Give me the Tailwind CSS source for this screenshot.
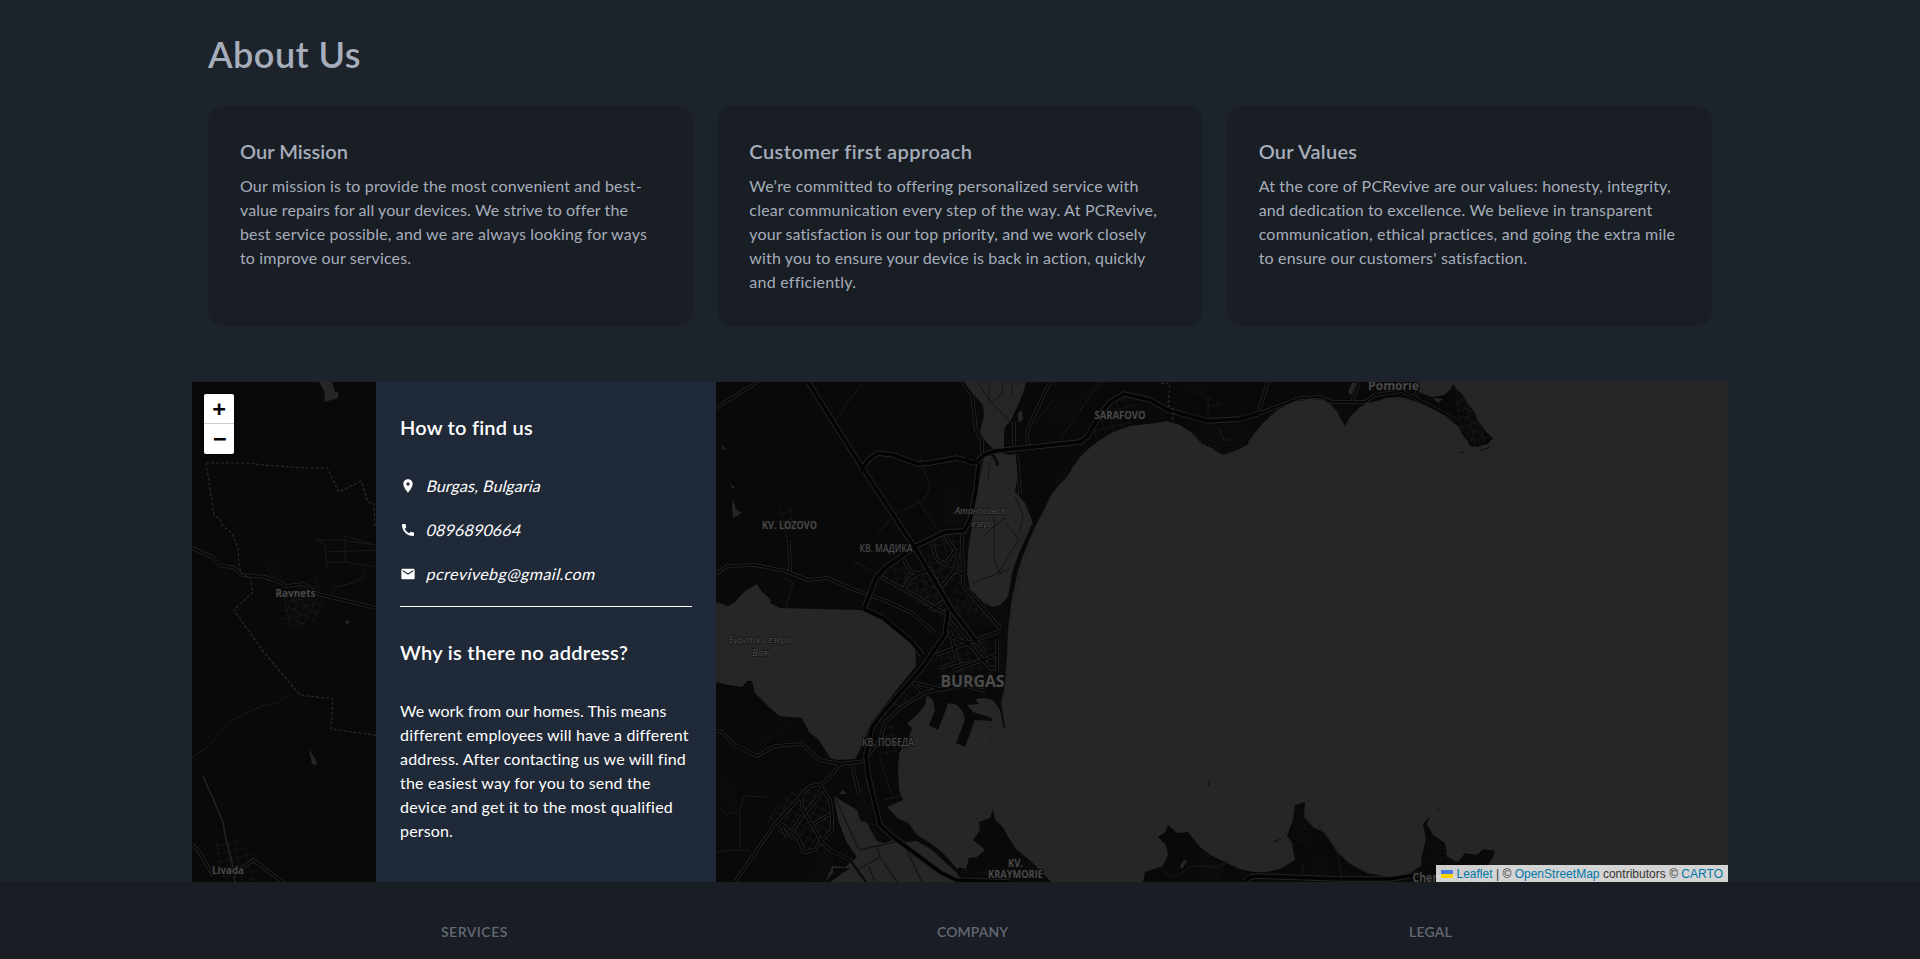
<!DOCTYPE html>
<html lang="en">
<head>
<meta charset="utf-8">
<title>PCRevive - About Us</title>
<script src="https://cdn.jsdelivr.net/npm/@tailwindcss/browser@4"></script>
</head>
<body class="h-[959px] overflow-hidden bg-[#1d232a] font-['Lato',sans-serif] text-[#a6adbb]">

<section class="mx-auto w-[1504px] pt-[34px]">
  <h1 class="text-4xl font-semibold tracking-[0.455px] whitespace-nowrap">About Us</h1>
  <div class="mt-8 grid h-[220px] grid-cols-3 gap-6">
    <article class="rounded-2xl bg-[#191d24] px-8 pt-[31px] whitespace-nowrap">
      <h2 class="text-xl font-semibold tracking-[0.016px]">Our Mission</h2>
      <p class="mt-[9px] text-base leading-6">
        <span class="block tracking-[0.171px]">Our mission is to provide the most convenient and best-</span>
        <span class="block tracking-[0.096px]">value repairs for all your devices. We strive to offer the</span>
        <span class="block tracking-[0.158px]">best service possible, and we are always looking for ways</span>
        <span class="block tracking-[0.166px]">to improve our services.</span>
      </p>
    </article>
    <article class="rounded-2xl bg-[#191d24] px-8 pt-[31px] whitespace-nowrap">
      <h2 class="text-xl font-semibold tracking-[0.431px]">Customer first approach</h2>
      <p class="mt-[9px] text-base leading-6">
        <span class="block tracking-[0.185px]">We’re committed to offering personalized service with</span>
        <span class="block tracking-[0.199px]">clear communication every step of the way. At PCRevive,</span>
        <span class="block tracking-[0.112px]">your satisfaction is our top priority, and we work closely</span>
        <span class="block tracking-[0.135px]">with you to ensure your device is back in action, quickly</span>
        <span class="block tracking-[0.239px]">and efficiently.</span>
      </p>
    </article>
    <article class="rounded-2xl bg-[#191d24] px-8 pt-[31px] whitespace-nowrap">
      <h2 class="text-xl font-semibold tracking-[0.257px]">Our Values</h2>
      <p class="mt-[9px] text-base leading-6">
        <span class="block tracking-[0.177px]">At the core of PCRevive are our values: honesty, integrity,</span>
        <span class="block tracking-[0.138px]">and dedication to excellence. We believe in transparent</span>
        <span class="block tracking-[0.201px]">communication, ethical practices, and going the extra mile</span>
        <span class="block tracking-[0.186px]">to ensure our customers' satisfaction.</span>
      </p>
    </article>
  </div>
</section>

<section class="relative mx-auto mt-14 flex h-[500px] w-[1536px] overflow-hidden bg-[#090909]">
  <svg class="absolute inset-0" width="1536" height="500" viewBox="192 382 1536 500" fill="none" stroke-linejoin="round">
    <defs>
      <pattern id="dots" width="4" height="4" patternUnits="userSpaceOnUse"><rect width="1" height="1" fill="#191919"/><rect x="2" y="2" width="1" height="1" fill="#191919"/></pattern>
      <pattern id="blocks" width="9" height="8" patternUnits="userSpaceOnUse" patternTransform="rotate(-12)"><path d="M0 0H9M0 0V8" stroke="#1c1c1c" stroke-width="1"/></pattern>
      <pattern id="blocks2" width="7" height="8" patternUnits="userSpaceOnUse" patternTransform="rotate(28)"><path d="M0 0H7M0 0V8" stroke="#1b1b1b" stroke-width="1"/></pattern>
    </defs>

    <!-- sea -->
    <path fill="#262626" d="M1452 382L1457 390 1462 394 1467 402 1475 413 1477 420 1482 426 1486 432 1493 438 1488 444 1477 447 1470 446 1468 442 1462 434 1459 427 1450 420 1437 411 1417 402 1405 398 1397 397 1386 398 1377 401 1367 403 1360 407 1350 417 1345 426 1340 418 1337 411 1330 404 1323 400 1310 399 1293 402 1277 410 1263 423 1253 435 1247 445 1237 450 1223 455 1216 451 1210 447 1202 444 1192 433 1180 425 1167 421 1155 423 1147 424 1130 426 1113 432 1097 442 1087 450 1080 457 1073 467 1067 477 1058 486 1050 497 1043 512 1035 527 1025 550 1017 573 1012 597 1008 630 1007 657 1004 690 1001 703 1005 727 1004 729 1000 710 993 700 985 698 975 699 979 704 967 705 973 712 992 718 992 721 975 720 965 747 956 743 965 720 963 712 957 705 948 703 945 712 938 730 929 725 935 710 933 700 927 695 925 705 917 715 907 723 912 728 908 740 899 753 898 770 899 790 903 800 896 803 887 807 891 811 897 818 908 823 917 835 930 843 943 853 951 862 957 869 959 867 966 869 969 858 977 857 985 850 973 840 980 830 979 822 990 818 993 809 995 820 1003 827 1008 837 1017 850 1033 863 1051 882 1143 882 1145 872 1163 866 1168 855 1166 845 1158 837 1165 832 1168 825 1177 833 1188 832 1200 847 1212 856 1227 863 1240 869 1253 872 1267 872 1280 869 1295 860 1293 850 1292 843 1287 836 1293 820 1295 805 1305 802 1304 817 1313 827 1325 833 1337 852 1350 864 1367 873 1390 877 1410 873 1421 866 1422 855 1426 840 1423 824 1430 816 1427 824 1433 835 1445 843 1447 857 1458 862 1465 853 1477 855 1483 849 1495 851 1493 857 1488 865 1487 882 1728 882V382Z"/>
    <!-- inland lakes -->
    <g fill="#262626">
      <path d="M963 382L974 395 983 405 984 416 980 431 983 438 993 449 1004 448 1004 434 1005 427 1011 420 1018 405 1023 393 1026 382Z"/>
      <path d="M1018 413L1022 410 1023 420 1018 422Z"/>
      <path d="M984 457L1000 453 1010 455 1017 454 1020 470 1017 479 1015 492 1025 503 1032 520 1033 528 1025 541 1018 556 1012 573 1009 592 1007 598 1000 605 994 607 985 604 970 589 967 573 968 552 974 510Z"/>
      <path d="M716 602L728 606 735 602 745 591 757 584 762 592 771 600 770 603 780 608 858 610 873 612 888 621 908 637 915 646 916 666 898 688 871 723 859 752 855 759 838 760 830 758 819 740 809 732 802 718 779 716 770 708 755 693 752 681 747 681 742 687 728 685 716 682Z"/>
      <path d="M834 796L842 801 857 810 860 820 867 823 877 841 884 843 893 840 907 842 917 841 932 850 945 862 957 873 962 882H830L850 868 833 868 833 873 825 882 832 866 845 867 857 857 847 843 838 820Z"/>
      <path d="M839 794L843 790 847 794Z"/>
      <path d="M319 382H332L335 392 338 392 338 398 325 402 324 391Z"/>
      <path d="M309 749L317 762 316 765 312 764Z"/><path d="M345 621h5l-3 4z"/>
      <path d="M733 499L736 509 742 513 733 518 732 507Z"/><path d="M722 445L726 450 722 449Z"/><path d="M730 483l5 5-3 0z"/>
      <path d="M1415 382L1418 392 1432 397 1444 395 1450 390 1454 382Z"/><path d="M1433 398l10 1-5 4z"/>
      <path d="M1348 392L1352 383H1357L1351 395Z"/>
      <path d="M1180 866L1184 860 1187 861 1182 869Z"/>
    </g>

    <!-- urban and wooded areas -->
    <g fill="url(#dots)">
      <path d="M1008 630V600L1030 550 1012 590 1020 560 1035 527ZM1012 590L995 607 975 595 962 600 965 615 985 628 1007 630ZM1085 448L1060 470 1050 497 1080 457ZM1192 433L1200 425 1255 427 1250 445 1223 455 1205 446ZM943 490h18v36h-18zM1050 410l20-18v28h-20zM1185 386h23v10h-23z"/>
      <path d="M755 744L790 718V725L760 750ZM716 770L735 790 738 815 716 790ZM865 765L866 800 880 838 874 840 857 808ZM1001 622H1007V690L998 690ZM910 585L935 600 975 625 960 630 915 600ZM1345 400l10 4-10 20-8-12zM1292 810h12l10 25-5 15-15-10zM1195 850l30 13-5 16h-25zM1428 838l18 8 10 18-30 0zM265 560l15-2 2 20-15 3zM1310 858h20v20h-20zM820 850h15l-5 32h-25z"/>
      <path d="M1048 422L1100 382H1110L1070 420 1065 425Z"/>
      <path d="M960 870h20l50-10 10 15h-80z"/>
    </g>
    <g fill="url(#blocks)">
      <path d="M931 653L960 645 990 640 996 680 960 693 940 690ZM890 560L930 580 965 610 955 625 880 580ZM930 535L960 530 962 575 940 590 928 560Z"/>
      <path d="M1110 398L1125 395 1145 412 1128 425 1085 440 1100 415ZM1455 395L1470 402 1492 438 1475 446 1458 425Z"/>
      <path d="M775 506h19v20l-5 15-14-14zM876 728L898 722 897 752 880 760ZM1208 397h14v12h-14z"/>
      <path d="M278 605L290 590 318 578 324 608 298 628 282 625ZM212 842L240 840 258 862 258 882 215 876Z"/>
    </g>
    <g fill="url(#blocks2)">
      <path d="M765 820L785 795 805 788 830 800 832 840 805 855 785 840ZM893 705L910 693 912 700 895 713ZM902 572L940 570 945 600 930 612 900 588ZM950 560L962 555 963 590 990 618 955 610Z"/>
      <path d="M280 608L300 592 322 600 318 620 300 630ZM1455 390L1466 400 1488 440 1470 442Z"/>
      <path d="M1013 498L1024 503 1030 525 1020 545 1008 570 1015 540ZM985 395L1010 390 1015 410 990 430Z" opacity=".6"/>
    </g>

    <!-- lake dividers -->
    <g stroke="#141414">
      <path d="M978 382L989 400 1011 422M989 400V382M994 401L1002 394 1003 382M994 517V560L1001 575M972 583L1010 569M1007 525L1020 541M1015 496L1023 515 1020 530M984 536l10-10 12-8M998 573L1018 541M988 480L990 462"/>
      <path stroke-width="1.3" d="M836 800L859 850 895 842 907 842M877 848L880 857 897 882M859 869L880 857M869 867L875 882M907 851L922 882"/>
      <path stroke="#0b0b0b" stroke-width="3" d="M991 452L997 462 997 466"/>
    </g>

    <!-- minor streets -->
    <g stroke="#191919">
      <path d="M192 758L207 747 233 720 262 706 278 703 287 696M318 540H340L375 545M326 562H345L376 567M345 536V563M316 539L325 545 327 568M345 536L375 545M326 552L376 550M328 600L336 587 352 583 363 578 364 570"/>
      <path d="M863 383L848 402 836 420M920 458L930 487 924 500 897 513 876 535M919 502L940 532M784 577L793 583 786 608M853 561L880 575M1034 423L1054 400"/>
      <path d="M716 803L726 814 740 812 744 796 767 797M740 812V850M716 852L728 850 750 850M880 758L892 796M884 800L903 795M866 780L876 810M1160 868L1172 878 1192 866 1218 867 1230 860M1303 862V876M1318 825L1337 850 1342 878"/>
      <path d="M1012 382V396M1060 440L1100 382M1218 427L1224 440 1232 440M1208 397V420M1035 382L1010 382"/>
    </g>
    <path d="M203 776L223.500 823 224 830 232 862 235 882" stroke="#262626" stroke-width="1.300"/>

    <!-- medium roads -->
    <g stroke="#262626" stroke-width="3.6">
      <path d="M192 548L212 557 221 566 233 567 242 575 265 577 280 582 286 586 303 584 318 594 376 608M192 845L198 850 213 875M232 876L253 860 294 890"/>
      <path d="M716 408L757 382M789 540L790 573M716 574L727 566 755 565 785 571 808 580 827 578 855 590 886 601 912 613 935 633"/>
      <path d="M963 382L972 395 976 430 982 442V458M1050 382L1028 428 1027 440 1030 447M1014 422V445M1017 455L1019 480 1020 495M716 731L722 732 735 745 757 756 775 746 802 744 820 760 840 764 865 761M840 764L832 775 822 784 810 786 775 824 735 882M852 764L859 794M820 786L830 800 832 815 832 830 822 840 815 850 804 852 798 838 778 821M801 797L803 810 812 825 822 842 830 850 850 860 866 882M822 787L816 800 806 812M813 824L828 815M780 825L788 838M793 830L803 815"/>
      <path d="M924 693L900 708 885 722 880 740 867 757M924 693L960 684 985 691M960 684L943 690 912 682 921 691M932 543L936 558 945 565 955 550 947 540 945 532M963 575L955 570 958 555 953 553M940 588L955 570M904 560L911 572 921 573 930 570M903 590L910 578 930 568 946 600 931 610M878 575L905 590 946 614M936 655L1000 631M950 622L990 668 995 668M960 622L985 652M997 640V672M943 632L970 645M955 670L996 655M950 630L958 665M963 660L940 668M962 535L963 585 980 605 1000 628"/>
      <path d="M1258 414L1300 398 1320 397 1332 402 1352 402 1365 402 1375 395 1402 391 1456 420M1352 402L1359 382M1268 382L1258 414M1415 396L1419 388"/>
    </g>
    <g stroke="#060606" stroke-width="2">
      <path d="M192 548L212 557 221 566 233 567 242 575 265 577 280 582 286 586 303 584 318 594 376 608M192 845L198 850 213 875M232 876L253 860 294 890"/>
      <path d="M716 408L757 382M789 540L790 573M716 574L727 566 755 565 785 571 808 580 827 578 855 590 886 601 912 613 935 633"/>
      <path d="M963 382L972 395 976 430 982 442V458M1050 382L1028 428 1027 440 1030 447M1014 422V445M1017 455L1019 480 1020 495M716 731L722 732 735 745 757 756 775 746 802 744 820 760 840 764 865 761M840 764L832 775 822 784 810 786 775 824 735 882M852 764L859 794M820 786L830 800 832 815 832 830 822 840 815 850 804 852 798 838 778 821M801 797L803 810 812 825 822 842 830 850 850 860 866 882M822 787L816 800 806 812M813 824L828 815M780 825L788 838M793 830L803 815"/>
      <path d="M924 693L900 708 885 722 880 740 867 757M924 693L960 684 985 691M960 684L943 690 912 682 921 691M932 543L936 558 945 565 955 550 947 540 945 532M963 575L955 570 958 555 953 553M940 588L955 570M904 560L911 572 921 573 930 570M903 590L910 578 930 568 946 600 931 610M878 575L905 590 946 614M936 655L1000 631M950 622L990 668 995 668M960 622L985 652M997 640V672M943 632L970 645M955 670L996 655M950 630L958 665M963 660L940 668M962 535L963 585 980 605 1000 628"/>
      <path d="M1258 414L1300 398 1320 397 1332 402 1352 402 1365 402 1375 395 1402 391 1456 420M1352 402L1359 382M1268 382L1258 414M1415 396L1419 388"/>
    </g>

    <!-- main roads -->
    <g stroke="#242424" stroke-width="5.4">
      <path d="M808 382L863 469 915 548 952 610 975 640M861 471L868 460 878 453 893 455 918 464 930 463 957 458 975 463 984 455 995 451 1080 442 1087 437 1100 415 1110 402 1124 394 1150 400 1168 410 1207 421 1240 419 1258 414M979 463L976 490 970 520 964 531 945 532 916 546 885 568 876 578 864 609M864 609L883 618 912 642 922 655M948 610L945 635 922 668 885 710 872 727 866 755 868 775 880 825 893 837 940 872 956 880 1010 882"/>
      <path d="M1244 882L1250 877 1258 876 1340 879 1390 879 1422 874"/>
    </g>
    <g stroke="#030303" stroke-width="3.6">
      <path d="M808 382L863 469 915 548 952 610 975 640M861 471L868 460 878 453 893 455 918 464 930 463 957 458 975 463 984 455 995 451 1080 442 1087 437 1100 415 1110 402 1124 394 1150 400 1168 410 1207 421 1240 419 1258 414M979 463L976 490 970 520 964 531 945 532 916 546 885 568 876 578 864 609M864 609L883 618 912 642 922 655M948 610L945 635 922 668 885 710 872 727 866 755 868 775 880 825 893 837 940 872 956 880 1010 882"/>
      <path d="M1244 882L1250 877 1258 876 1340 879 1390 879 1422 874"/>
      <ellipse cx="971" cy="460" rx="4" ry="3" stroke-width="2"/>
      <path stroke="#090909" d="M1033 525L1020 555 1012 590" stroke-width="3"/>
    </g>
    <path d="M1208 781l1 2-1 3M1273 842l8-3M1460 453l4-1M1480 451l10-4M1437 810h2" stroke="#0b0b0b"/>
    <path d="M992 722L991 745 987 762M904 801L925 814M908 820L905 827M1098 445L1107 448 1108 440" stroke="#161616" stroke-dasharray="1 4"/>

    <!-- municipality borders -->
    <path d="M206 463L245 463 265 465 305 468 327 468 339 492 361 481 368 502 374 504 375 526M206 463L214 515 220 519 222 525 232 533 238 548 239 565 241 573 250 578 253 592 234 610 262 650 300 695 333 699 331 729 388 737M1161 383L1170 384 1168 405 1174 410 1172 422" stroke="#2b2b2b" stroke-width="1.2" stroke-dasharray="3 2"/>

    <!-- place names -->
    <g fill="#484848" stroke="#0c0c0c" stroke-width="2" paint-order="stroke" font-family="Open Sans, sans-serif" font-weight="700" text-anchor="middle" font-size="10">
      <text x="295.500" y="597" textLength="40" lengthAdjust="spacingAndGlyphs">Ravnets</text>
      <text x="228" y="873.500" textLength="32" lengthAdjust="spacingAndGlyphs">Livada</text>
      <text x="789.500" y="529" textLength="55" lengthAdjust="spacingAndGlyphs" font-size="10">KV. LOZOVO</text>
      <text x="886" y="552" textLength="53" lengthAdjust="spacingAndGlyphs" font-size="10.500" font-weight="600">КВ. МАДИКА</text>
      <text x="888" y="746" textLength="52" lengthAdjust="spacingAndGlyphs" font-size="10.500" font-weight="600">КВ. ПОБЕДА</text>
      <text x="1120" y="419" textLength="51" lengthAdjust="spacingAndGlyphs" font-size="10">SARAFOVO</text>
      <text x="1393.500" y="390" textLength="51" lengthAdjust="spacingAndGlyphs" font-size="11.500">Pomorie</text>
      <text x="972.500" y="687" textLength="64" lengthAdjust="spacingAndGlyphs" font-size="16" fill="#4c4c4c">BURGAS</text>
      <text x="1015.500" y="867" textLength="15" lengthAdjust="spacingAndGlyphs" font-size="10">KV.</text>
      <text x="1015.500" y="878" textLength="55" lengthAdjust="spacingAndGlyphs" font-size="10">KRAYMORIE</text>
      <text x="1450" y="882" textLength="75" lengthAdjust="spacingAndGlyphs" font-size="11.500">Chernomorets</text>
      <g font-style="italic" font-weight="400" font-size="9" fill="#505050" stroke="#141414" stroke-width="1.500">
        <text x="982.500" y="514" textLength="55" lengthAdjust="spacingAndGlyphs">Атанасовско</text>
        <text x="982.500" y="526.500" textLength="22" lengthAdjust="spacingAndGlyphs">езеро</text>
        <text x="760" y="643" textLength="62" lengthAdjust="spacingAndGlyphs">Бургаско езеро</text>
        <text x="760" y="655.500" textLength="21" lengthAdjust="spacingAndGlyphs">(Вая)</text>
      </g>
    </g>
  </svg>

  <!-- zoom control -->
  <div class="absolute top-3 left-3 w-[30px] overflow-hidden rounded-xs bg-white text-center font-['DejaVu_Sans_Mono',monospace] text-[22px] leading-[30px] font-bold text-black shadow-[0_1px_5px_rgba(0,0,0,0.65)]">
    <div class="h-[30px] border-b border-[#ccc] leading-[29px]">+</div>
    <div class="h-[30px] pl-px">−</div>
  </div>

  <!-- contact panel -->
  <div class="relative ml-[184px] h-full w-[340px] bg-[#1f2937] px-6 pt-[31px] whitespace-nowrap text-white">
    <h3 class="text-xl font-semibold tracking-[0.215px]">How to find us</h3>
    <address class="mt-[33px] flex flex-col gap-5 leading-6 not-italic">
      <div class="flex items-center gap-[11px]">
        <svg class="size-4" viewBox="0 0 24 24" fill="currentColor"><path d="M12 2C8.130 2 5 5.130 5 9c0 5.250 7 13 7 13s7-7.750 7-13c0-3.870-3.130-7-7-7zm0 9.500a2.500 2.500 0 0 1 0-5 2.500 2.500 0 0 1 0 5z"/></svg>
        <span class="inline-block -skew-x-[14deg] tracking-[0.117px]">Burgas, Bulgaria</span>
      </div>
      <div class="flex items-center gap-[11px]">
        <svg class="size-4" viewBox="0 0 24 24" fill="currentColor"><path d="M20.010 15.380c-1.230 0-2.420-.2-3.530-.56a.977.977 0 0 0-1.010.24l-1.570 1.970c-2.830-1.350-5.480-3.900-6.890-6.830l1.950-1.660c.27-.28.35-.67.24-1.020-.37-1.110-.56-2.300-.56-3.530 0-.54-.45-.99-.99-.99H4.190C3.650 3 3 3.240 3 3.990 3 13.280 10.730 21 20.010 21c.71 0 .99-.63.99-1.180v-3.450c0-.54-.45-.99-.99-.99z"/></svg>
        <span class="inline-block -skew-x-[14deg] tracking-[0.200px]">0896890664</span>
      </div>
      <div class="flex items-center gap-[11px]">
        <svg class="size-4" viewBox="0 0 24 24" fill="currentColor"><path d="M20 4H4c-1.100 0-1.990.9-1.990 2L2 18c0 1.100.9 2 2 2h16c1.100 0 2-.9 2-2V6c0-1.100-.9-2-2-2zm0 4l-8 5-8-5V6l8 5 8-5v2z"/></svg>
        <span class="inline-block -skew-x-[14deg] tracking-[0.450px]">pcrevivebg@gmail.com</span>
      </div>
    </address>
    <hr class="mt-5 border-white">
    <h3 class="mt-[31px] text-xl font-semibold tracking-[0.290px]">Why is there no address?</h3>
    <p class="mt-[33px] text-base leading-6">
      <span class="block tracking-[0.043px]">We work from our homes. This means</span>
      <span class="block tracking-[0.170px]">different employees will have a different</span>
      <span class="block tracking-[0.191px]">address. After contacting us we will find</span>
      <span class="block tracking-[0.173px]">the easiest way for you to send the</span>
      <span class="block tracking-[0.211px]">device and get it to the most qualified</span>
      <span class="block tracking-[0.158px]">person.</span>
    </p>
  </div>

  <!-- attribution -->
  <div class="absolute right-0 bottom-0 flex h-[17px] w-[292px] items-center bg-white/80 px-[5px] font-['Liberation_Sans',sans-serif] text-xs leading-[17px] whitespace-pre text-[#333]"><svg class="mr-[3.500px]" width="12" height="8" viewBox="0 0 12 8"><path fill="#4C7BE1" d="M0 0h12v4H0z"/><path fill="#FFD500" d="M0 4h12v4H0z"/></svg><div class="pt-px tracking-[0.015px]"><span class="text-[#0078A8]">Leaflet</span> | © <span class="text-[#0078A8]">OpenStreetMap</span> contributors © <span class="text-[#0078A8]">CARTO</span></div></div>
</section>

<footer class="h-[77px] bg-[#191d24]">
  <div class="mx-auto flex w-[1038px] pt-10 text-sm font-semibold whitespace-nowrap text-[#a6adbb]/55">
    <div class="w-[496px] tracking-[0.480px]">SERVICES</div>
    <div class="w-[472px] tracking-[0.100px]">COMPANY</div>
    <div class="tracking-[0.200px]">LEGAL</div>
  </div>
</footer>
</body>
</html>
